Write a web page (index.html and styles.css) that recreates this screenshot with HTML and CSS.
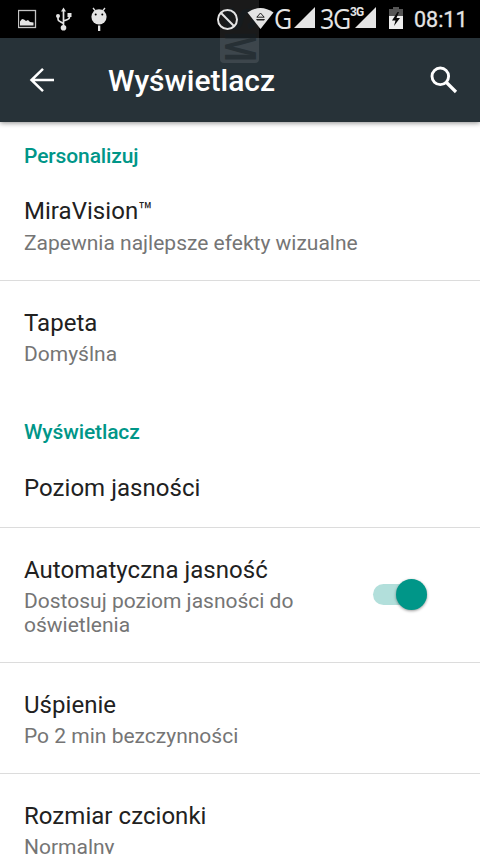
FILE: index.html
```html
<!DOCTYPE html>
<html lang="pl">
<head>
<meta charset="utf-8">
<title>Wyświetlacz</title>
<link rel="stylesheet" href="styles.css">
</head>
<body>
<div class="screen">
  <div class="status">
    <svg class="ic-left" width="92" height="38" viewBox="18 0 92 38">
      <rect x="18.500" y="10.500" width="17" height="17" fill="none" stroke="#c4c4c4" stroke-width="1.300"/>
      <path d="M20 25.500v-4l2-2.500 2 .500 2 1.500 2-1 2 2 3.500 .500v3z" fill="#e4e4e4"/>
      <g fill="none" stroke="#e4e4e4" stroke-width="1.700"><path d="M63.500 27V10M58 16v3q0 2 2 2.500l3.500 2M69.500 15v2q0 2-2 2.500l-4 1.500"/></g>
      <g fill="#e4e4e4"><path d="M63.500 7.500l2.500 4h-5z"/><circle cx="63.500" cy="27.800" r="2.800"/><circle cx="58" cy="16" r="2"/><path d="M67.500 13h4v4h-4z"/>
      <circle cx="99" cy="16.800" r="7.600"/><path d="M98 25.500h2.300V31H98z"/></g>
      <path d="M93 8l2.500 3M105 8l-2.500 3" stroke="#e4e4e4" stroke-width="1.300"/>
      <circle cx="95.700" cy="14.500" r="1"/><circle cx="102.300" cy="14.500" r="1"/>
    </svg>
    <svg class="ic-right" width="58" height="38" viewBox="216 0 58 38">
      <g fill="none" stroke="#e4e4e4" stroke-width="2"><circle cx="227.500" cy="19.500" r="9.500"/><path d="M220.800 12.800l13.400 13.400"/></g>
      <path d="M247.500 12.500Q260.500 3.500 273.500 12.500L260.500 29z" fill="#e4e4e4"/>
      <path d="M260.500 13l3.700 4.200h-7.400z" fill="none" stroke="#222"/><path d="M256 19h9l-1 1.500h-7z" fill="#222"/>
    </svg>
    <span class="net g">G</span>
    <svg class="tri" width="22" height="38" viewBox="0 0 22 38"><path d="M21 7v21H0z" fill="#e4e4e4"/></svg>
    <span class="net g3">3G</span>
    <span class="small">3G</span>
    <svg class="tri2" width="22" height="38" viewBox="0 0 22 38"><path d="M21 7v21H0z" fill="#e4e4e4"/></svg>
    <svg class="bat" width="14" height="38" viewBox="0 0 14 38">
      <path d="M0 9h4V7h6v2h4v7H0z" fill="#555"/><path d="M0 16h14v13H0z" fill="#eee"/>
      <path d="M8.500 12L3 20.500h3.500L5 26l6-8H7.500L10 12z" fill="#080808"/>
    </svg>
    <span class="clock">08:11</span>
  </div>
  <header class="bar">
    <svg class="back" width="26" height="26" viewBox="0 0 26 26"><path d="M25 13H3M14 1.800L2.500 13 14 24.200" fill="none" stroke="#fff" stroke-width="2.500"/></svg>
    <h1>Wyświetlacz</h1>
    <svg class="search" width="28" height="28" viewBox="0 0 28 28"><circle cx="10.300" cy="10.300" r="8.300" fill="none" stroke="#fff" stroke-width="2.900"/><path d="M16.500 16.500l9.500 9.500" stroke="#fff" stroke-width="3.200"/></svg>
  </header>
  <div class="mark"><span>SM</span></div>
  <main>
    <h2 class="first">Personalizuj</h2>
    <section class="row top"><h3>MiraVision™</h3><p>Zapewnia najlepsze efekty wizualne</p></section>
    <section class="row last"><h3>Tapeta</h3><p>Domyślna</p></section>
    <h2>Wyświetlacz</h2>
    <section class="row single"><h3>Poziom jasności</h3></section>
    <section class="row auto">
      <div class="copy"><h3>Automatyczna jasność</h3><p>Dostosuj poziom jasności do oświetlenia</p></div>
      <div class="switch"><div class="thumb"></div></div>
    </section>
    <section class="row"><h3>Uśpienie</h3><p>Po 2 min bezczynności</p></section>
    <section class="row"><h3>Rozmiar czcionki</h3><p>Normalny</p></section>
  </main>
</div>
</body>
</html>
```
FILE: styles.css
```css
* { box-sizing: border-box; }
body, h1, h2, h3, p { margin: 0; }
body { font-family: Roboto, sans-serif; background: #fff; overflow: hidden; }
.screen { position: relative; width: 480px; height: 854px; overflow: hidden; }
.status { display: flex; height: 38px; background: #000; color: #e4e4e4; line-height: 38px; white-space: nowrap; }
.status > * { position: relative; z-index: 2; }
.status svg { display: block; flex: none; }
.ic-left { margin-left: 18px; }
.ic-right { margin-left: 106px; }
.net { font-family: "Open Sans", sans-serif; font-size: 25px; line-height: 36px; letter-spacing: -1.2px; transform: scaleY(1.08); }
.g { width: 20px; }
.g3 { width: 29px; margin-left: 4px; }
.small { width: 14px; margin-left: 1px; font-size: 12px; font-weight: 700; line-height: 25px; letter-spacing: -.8px; }
.tri2 { margin-left: -9px; }
.bat { margin-left: 12px; }
.clock { margin-left: 11px; font-size: 21.5px; font-weight: 400; line-height: 40px; -webkit-text-stroke: .3px #e4e4e4; }
.bar { display: flex; align-items: center; height: 84px; padding: 0 22px 0 29px; background: #273238; color: #fff; box-shadow: 0 1px 5px rgba(0,0,0,.45); }
h1 { flex: 1; margin: 1px 0 0 53px; font-size: 30px; line-height: 36px; font-weight: 500; }
.mark { position: absolute; z-index: 1; left: 220px; top: 0; width: 39px; height: 63px; border-radius: 0 0 4px 4px; background: rgba(255,255,255,.1); }
.mark span { position: absolute; right: 1px; bottom: 1px; writing-mode: vertical-rl; transform: scaleY(.84); transform-origin: bottom; font-family: "Liberation Sans", sans-serif; font-size: 44px; font-weight: 700; line-height: 36px; color: rgba(20,29,34,.55); }
h2 { height: 56px; padding: 28px 24px 0; font-size: 21px; line-height: 25px; font-weight: 500; letter-spacing: -.12px; color: #009688; }
h2.first { height: 48px; padding-top: 22px; }
.row { height: 111px; padding: 28px 24px 0; border-bottom: 1px solid #dcdcdc; }
.row.top { padding-top: 27px; }
.row.top p { margin-top: 6px; }
.row.last { border-color: transparent; }
.row.single { height: 80px; padding-top: 26px; }
.row.auto { display: flex; height: 135px; }
h3 { font-size: 24px; line-height: 28px; font-weight: 400; letter-spacing: .04px; color: #212121; }
p { margin-top: 5px; font-size: 21px; line-height: 24px; color: #757575; }
.copy { width: 300px; }
.switch { display: flex; width: 54px; height: 21px; margin: 28px 0 0 49px; border-radius: 11px; background: #b2dfdb; }
.thumb { flex: none; width: 31px; height: 31px; margin: -5px 0 0 23px; border-radius: 50%; background: #009688; box-shadow: 0 1px 3px rgba(0,0,0,.4); }
```
